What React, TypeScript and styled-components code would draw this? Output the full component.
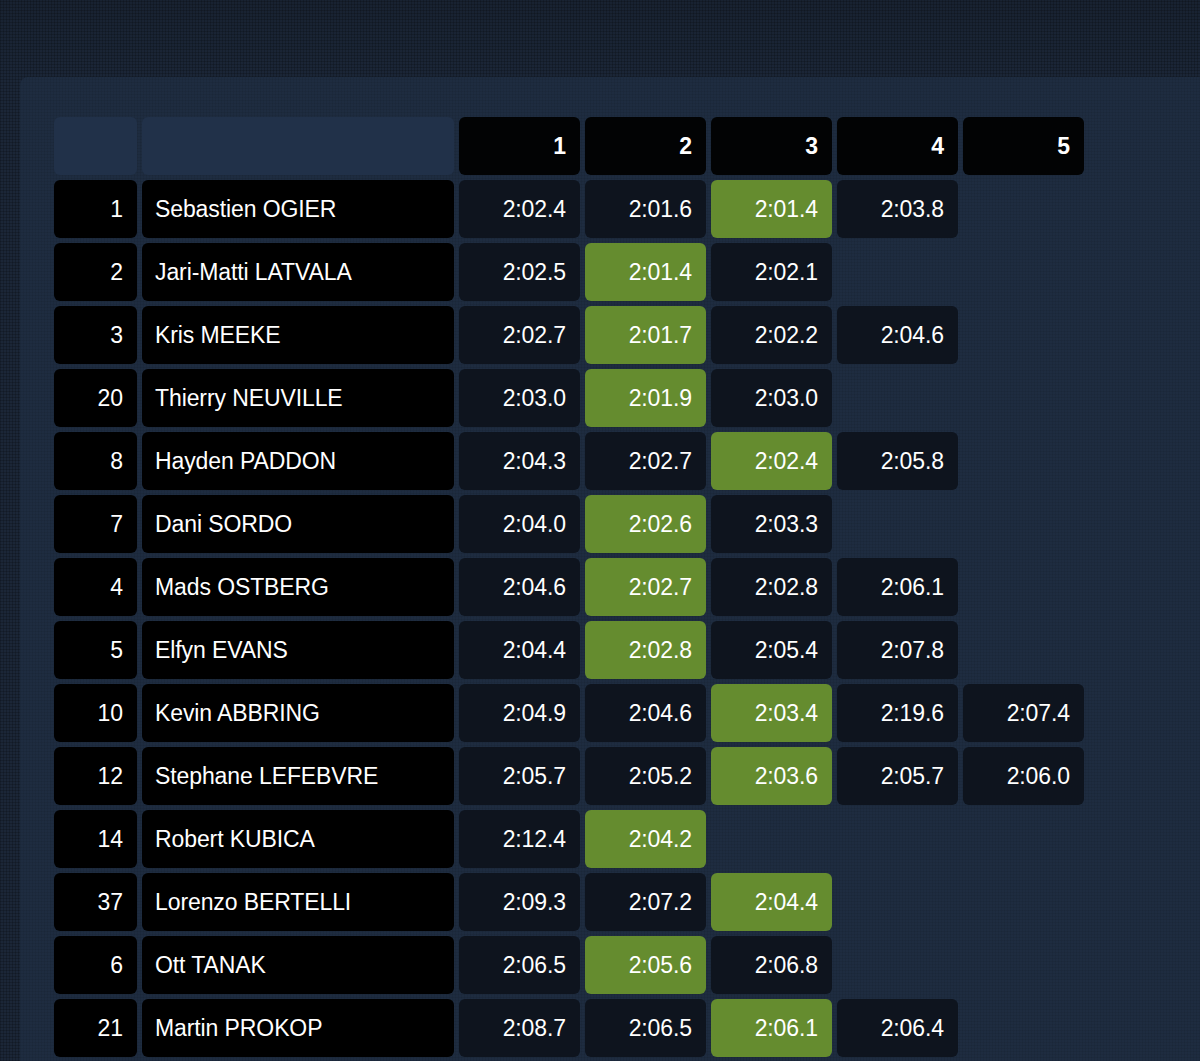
import React from "react";
import styled, { createGlobalStyle } from "styled-components";

const GlobalStyle = createGlobalStyle`
  html, body { margin: 0; padding: 0; }
  body {
    background-color: #1a2434;
    font-family: "Liberation Sans", Arial, Helvetica, sans-serif;
    overflow: hidden;
  }
`;

const Page = styled.div`
  min-height: 1061px;
  padding: 77px 0 0 20px;
  box-sizing: border-box;
  background-color: #1a2435;
  background-image:
    repeating-linear-gradient(0deg, rgba(0, 0, 0, 0.18) 0 1px, transparent 1px 3px),
    repeating-linear-gradient(90deg, rgba(0, 0, 0, 0.18) 0 1px, transparent 1px 3px),
    linear-gradient(180deg, #182231 0px, #1b2637 80px, #1b2637 100%);
`;

const Panel = styled.div`
  background-color: #1e2c40;
  background-image:
    repeating-linear-gradient(0deg, rgba(0, 0, 0, 0.06) 0 1px, transparent 1px 3px),
    repeating-linear-gradient(90deg, rgba(0, 0, 0, 0.06) 0 1px, transparent 1px 3px);
  border-radius: 8px 0 0 0;
  padding: 40px 0 40px 34px;
  min-height: 1000px;
`;

const Grid = styled.div`
  display: grid;
  grid-template-columns: 83px 312px repeat(5, 121px);
  grid-auto-rows: 58px;
  gap: 5px;
`;

type Kind = "blank" | "head" | "pos" | "name" | "time" | "best" | "empty";

const bg: Record<Kind, string> = {
  blank: "#213149",
  head: "#020304",
  pos: "#000000",
  name: "#000000",
  time: "#0e141e",
  best: "#658c2f",
  empty: "transparent",
};

const Cell = styled.div<{ $kind: Kind }>`
  background: ${(p) => bg[p.$kind]};
  border-radius: 6px;
  color: #ffffff;
  font-size: 23px;
  font-weight: ${(p) => (p.$kind === "head" ? 700 : 400)};
  display: flex;
  align-items: center;
  justify-content: ${(p) => (p.$kind === "name" ? "flex-start" : "flex-end")};
  padding: 0 14px 0 13px;
  box-sizing: border-box;
  white-space: nowrap;
  letter-spacing: -0.1px;
`;

type Row = { pos: string; name: string; times: string[]; best: number };

const rows: Row[] = [
  { pos: "1", name: "Sebastien OGIER", times: ["2:02.4", "2:01.6", "2:01.4", "2:03.8"], best: 2 },
  { pos: "2", name: "Jari-Matti LATVALA", times: ["2:02.5", "2:01.4", "2:02.1"], best: 1 },
  { pos: "3", name: "Kris MEEKE", times: ["2:02.7", "2:01.7", "2:02.2", "2:04.6"], best: 1 },
  { pos: "20", name: "Thierry NEUVILLE", times: ["2:03.0", "2:01.9", "2:03.0"], best: 1 },
  { pos: "8", name: "Hayden PADDON", times: ["2:04.3", "2:02.7", "2:02.4", "2:05.8"], best: 2 },
  { pos: "7", name: "Dani SORDO", times: ["2:04.0", "2:02.6", "2:03.3"], best: 1 },
  { pos: "4", name: "Mads OSTBERG", times: ["2:04.6", "2:02.7", "2:02.8", "2:06.1"], best: 1 },
  { pos: "5", name: "Elfyn EVANS", times: ["2:04.4", "2:02.8", "2:05.4", "2:07.8"], best: 1 },
  { pos: "10", name: "Kevin ABBRING", times: ["2:04.9", "2:04.6", "2:03.4", "2:19.6", "2:07.4"], best: 2 },
  { pos: "12", name: "Stephane LEFEBVRE", times: ["2:05.7", "2:05.2", "2:03.6", "2:05.7", "2:06.0"], best: 2 },
  { pos: "14", name: "Robert KUBICA", times: ["2:12.4", "2:04.2"], best: 1 },
  { pos: "37", name: "Lorenzo BERTELLI", times: ["2:09.3", "2:07.2", "2:04.4"], best: 2 },
  { pos: "6", name: "Ott TANAK", times: ["2:06.5", "2:05.6", "2:06.8"], best: 1 },
  { pos: "21", name: "Martin PROKOP", times: ["2:08.7", "2:06.5", "2:06.1", "2:06.4"], best: 2 },
];

export default function App() {
  return (
    <>
      <GlobalStyle />
      <Page>
        <Panel>
          <Grid>
            <Cell $kind="blank" />
            <Cell $kind="blank" />
            {[1, 2, 3, 4, 5].map((n) => (
              <Cell key={n} $kind="head">
                {n}
              </Cell>
            ))}
            {rows.map((r) => (
              <React.Fragment key={r.pos}>
                <Cell $kind="pos">{r.pos}</Cell>
                <Cell $kind="name">{r.name}</Cell>
                {[0, 1, 2, 3, 4].map((i) => {
                  const t = r.times[i];
                  const kind: Kind = t === undefined ? "empty" : i === r.best ? "best" : "time";
                  return (
                    <Cell key={i} $kind={kind}>
                      {t}
                    </Cell>
                  );
                })}
              </React.Fragment>
            ))}
          </Grid>
        </Panel>
      </Page>
    </>
  );
}
